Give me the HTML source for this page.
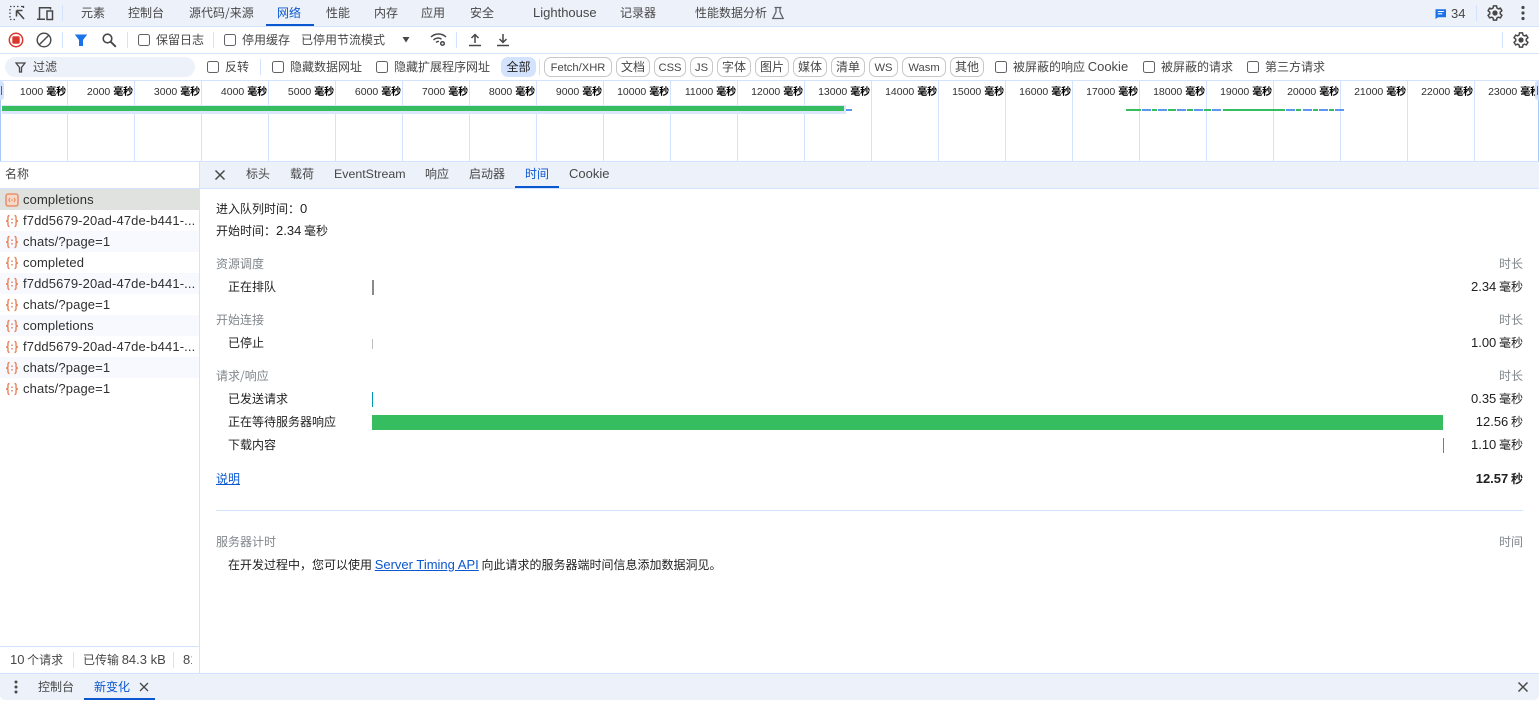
<!DOCTYPE html>
<html lang="zh"><head><meta charset="utf-8"><title>DevTools</title>
<style>
html,body{margin:0;padding:0;width:1539px;height:701px;overflow:hidden;background:#fff}
body{position:relative;font:12px/16px "Noto Sans CJK SC","Liberation Sans",sans-serif;color:#1f1f1f}
div,span,svg,a{position:absolute;box-sizing:border-box}
.t{white-space:nowrap;height:16px;line-height:16px}
.t b,.t a{position:static;font-weight:normal}
.l{font-family:"Liberation Sans",sans-serif;font-size:13px;position:static}
.g{color:#474747}
.m{color:#80868b}
.r{right:16px;text-align:right}
.bar{background:#edf2fa}
.ln{background:#d3e3fd}
.sep{width:1px;background:#d3e3fd}
.cb{width:12px;height:12px;border:1px solid #5f6368;border-radius:2.5px;background:#fff}
.chip{top:57px;height:20px;border:1px solid #c7c7c7;border-radius:7px;text-align:center;line-height:18px;color:#474747;background:#fff;white-space:nowrap}
.chip b{font-family:"Liberation Sans",sans-serif;font-weight:normal;font-size:11.2px;position:static}
.row{left:0;width:199px;height:21px}
.rt{left:23px;white-space:nowrap;font-family:"Liberation Sans",sans-serif;font-size:13px;line-height:21px;color:#303030;letter-spacing:.12px}
.ic{left:5px;width:14px;height:14px}
#tl{left:1px;top:81px;height:80px;display:flex;width:1541px}
#tl>p{box-sizing:border-box;margin:0;flex:0 0 67px;width:67px;height:80px;border-right:1px solid #d3e3fd;text-align:right;padding:3px 1px 0 0;font:10.5px/14px "Liberation Sans",sans-serif;color:#303030;white-space:nowrap;overflow:hidden}
#tl>p i{font:10px/14px "Noto Sans CJK SC",sans-serif;font-style:normal;color:#000;font-weight:700;letter-spacing:-.1px}
.gs,.bs{top:109px;height:2px}
.gs{background:#36bd60}.bs{background:#5c97f0}
</style></head><body>

<!-- top bar -->
<div class="bar" style="left:0;top:0;width:1539px;height:26px"></div>
<div class="ln" style="left:0;top:26px;width:1539px;height:1px"></div>
<svg style="left:8px;top:4px" width="18" height="18" viewBox="0 0 18 18" fill="none" stroke="#474747"><path d="M2 2.500h1.500M5.500 2.500h1.500M9 2.500h1.500M13 2.500h2.500v1.500M2 5v1.500M2 8.500v1.500M2 12v1.500M2 15.500h1.500M5.500 15.500h1.500" stroke-width="1.300"/><path d="M8.500 6.500h6M8.500 6.500v6M8.500 6.500l7.500 8.500" stroke-width="1.600"/></svg>
<svg style="left:36px;top:4px" width="18" height="18" viewBox="0 0 18 18" fill="none" stroke="#474747" stroke-width="1.500"><path d="M1 15.200h8M3.500 15V3.700h11v1.800"/><rect x="11" y="7" width="5.500" height="8.500"/></svg>
<div class="sep" style="left:62px;top:5px;height:16px"></div>
<span class="t g" style="left:81px;top:5px">元素</span>
<span class="t g" style="left:128px;top:5px">控制台</span>
<span class="t g" style="left:189px;top:5px">源代码/来源</span>
<span class="t" style="left:277px;top:5px;color:#0b57d0">网络</span>
<div style="left:266px;top:24px;width:48px;height:2px;background:#0b57d0"></div>
<span class="t g" style="left:326px;top:5px">性能</span>
<span class="t g" style="left:374px;top:5px">内存</span>
<span class="t g" style="left:421px;top:5px">应用</span>
<span class="t g" style="left:470px;top:5px">安全</span>
<span class="t g" style="left:533px;top:5px"><b class="l">Lighthouse</b></span>
<span class="t g" style="left:620px;top:5px">记录器</span>
<span class="t g" style="left:695px;top:5px">性能数据分析</span>
<svg style="left:771px;top:6px" width="14" height="14" viewBox="0 0 14 14" fill="none" stroke="#5f6368" stroke-width="1.300"><path d="M3.500 1.500h7M5 1.500v4.500L1.800 12.500h10.400L9 6V1.500"/></svg>
<svg style="left:1435px;top:8px" width="12" height="12" viewBox="0 0 12 12"><path d="M.5 1.200h10.500v8H3L.5 11z" fill="#1a73e8"/><path d="M2.800 3.500h6M2.800 5.800h4.500" stroke="#fff" stroke-width="1.100"/></svg>
<span class="t g" style="left:1451px;top:6px"><b class="l">34</b></span>
<div class="sep" style="left:1476px;top:5px;height:16px"></div>
<svg style="left:1486px;top:4px" width="18" height="18" viewBox="0 0 24 24" fill="none" stroke="#474747" stroke-width="2"><path d="M10 2.500h4l.6 2.900 1.800 1 2.800-.9 2 3.400-2.200 2v2.200l2.200 2-2 3.400-2.800-.9-1.800 1-.6 2.900h-4l-.6-2.900-1.800-1-2.800.9-2-3.400 2.200-2v-2.200l-2.200-2 2-3.400 2.800.9 1.800-1z"/><circle cx="12" cy="12" r="2.500" fill="#474747"/></svg>
<svg style="left:1520px;top:5px" width="6" height="16" viewBox="0 0 6 16" fill="#474747"><circle cx="3" cy="2.500" r="1.600"/><circle cx="3" cy="8" r="1.600"/><circle cx="3" cy="13.500" r="1.600"/></svg>

<!-- second row -->
<div class="ln" style="left:0;top:53px;width:1539px;height:1px"></div>
<svg style="left:8px;top:32px" width="16" height="16" viewBox="0 0 16 16"><circle cx="8" cy="8" r="6.700" fill="none" stroke="#dc362e" stroke-width="1.500"/><rect x="4.300" y="4.300" width="7.400" height="7.400" rx="1.500" fill="#dc362e"/></svg>
<svg style="left:36px;top:32px" width="16" height="16" viewBox="0 0 16 16" fill="none" stroke="#474747" stroke-width="1.400"><circle cx="8" cy="8" r="6.800"/><path d="M3.200 12.800L12.800 3.200"/></svg>
<div class="sep" style="left:62px;top:32px;height:16px"></div>
<svg style="left:74px;top:33px" width="14" height="14" viewBox="0 0 14 14"><path d="M.8 1.500h12.400L9 7v6H5V7z" fill="#1a73e8"/></svg>
<svg style="left:101px;top:32px" width="16" height="16" viewBox="0 0 16 16" fill="none" stroke="#474747" stroke-width="1.600"><circle cx="6.500" cy="6.500" r="4.300"/><path d="M9.800 9.800l5 5" stroke-width="1.900"/></svg>
<div class="sep" style="left:127px;top:32px;height:16px"></div>
<div class="cb" style="left:138px;top:34px"></div>
<span class="t g" style="left:156px;top:32px">保留日志</span>
<div class="sep" style="left:213px;top:32px;height:16px"></div>
<div class="cb" style="left:224px;top:34px"></div>
<span class="t g" style="left:242px;top:32px">停用缓存</span>
<span class="t g" style="left:301px;top:32px">已停用节流模式</span>
<svg style="left:401px;top:37px" width="10" height="6" viewBox="0 0 10 6"><path d="M1.500 0h7L5 5.500z" fill="#474747"/></svg>
<svg style="left:430px;top:32px" width="17" height="15" viewBox="0 0 17 15" fill="none" stroke="#474747" stroke-width="1.400"><path d="M1 5C5 1 12 1 16 5M3.500 8c2.500-2.500 6-2.500 8 -.8M6 10.500c1-1 2-1.200 3-.9"/><circle cx="12.500" cy="11.500" r="1.800" stroke-width="1.500"/></svg>
<div class="sep" style="left:456px;top:32px;height:16px"></div>
<svg style="left:468px;top:33px" width="14" height="14" viewBox="0 0 14 14" fill="none" stroke="#474747" stroke-width="1.500"><path d="M7 10V1.500M3.500 5L7 1.500 10.500 5"/><path d="M1 12.500h12"/></svg>
<svg style="left:496px;top:33px" width="14" height="14" viewBox="0 0 14 14" fill="none" stroke="#474747" stroke-width="1.500"><path d="M7 1v8.500M3.500 6L7 9.500 10.500 6"/><path d="M1 12.500h12"/></svg>
<div class="sep" style="left:1502px;top:32px;height:16px"></div>
<svg style="left:1512px;top:31px" width="18" height="18" viewBox="0 0 24 24" fill="none" stroke="#474747" stroke-width="2"><path d="M10 2.500h4l.6 2.900 1.800 1 2.800-.9 2 3.400-2.200 2v2.200l2.200 2-2 3.400-2.800-.9-1.800 1-.6 2.900h-4l-.6-2.900-1.800-1-2.800.9-2-3.400 2.200-2v-2.200l-2.200-2 2-3.400 2.800.9 1.800-1z"/><circle cx="12" cy="12" r="2.500" fill="#474747"/></svg>

<!-- filter row -->
<div class="ln" style="left:0;top:80px;width:1539px;height:1px"></div>
<div class="bar" style="left:5px;top:57px;width:190px;height:20px;border-radius:10px"></div>
<svg style="left:15px;top:62px" width="11" height="11" viewBox="0 0 11 11" fill="none" stroke="#474747" stroke-width="1.300"><path d="M1 1h9L6.500 5.500V10h-2V5.500z"/></svg>
<span class="t g" style="left:33px;top:59px">过滤</span>
<div class="cb" style="left:207px;top:61px"></div>
<span class="t g" style="left:225px;top:59px">反转</span>
<div class="sep" style="left:260px;top:59px;height:16px"></div>
<div class="cb" style="left:272px;top:61px"></div>
<span class="t g" style="left:290px;top:59px">隐藏数据网址</span>
<div class="cb" style="left:376px;top:61px"></div>
<span class="t g" style="left:394px;top:59px">隐藏扩展程序网址</span>
<div style="left:501px;top:57px;width:35px;height:20px;background:#d3e3fd;border-radius:7px;text-align:center;line-height:20px;color:#1f1f1f">全部</div>
<div class="sep" style="left:539px;top:59px;height:16px"></div>
<div class="chip" style="left:544px;width:68px"><b>Fetch/XHR</b></div>
<div class="chip" style="left:616px;width:34px">文档</div>
<div class="chip" style="left:654px;width:32px"><b>CSS</b></div>
<div class="chip" style="left:690px;width:23px"><b>JS</b></div>
<div class="chip" style="left:717px;width:34px">字体</div>
<div class="chip" style="left:755px;width:34px">图片</div>
<div class="chip" style="left:793px;width:34px">媒体</div>
<div class="chip" style="left:831px;width:34px">清单</div>
<div class="chip" style="left:869px;width:29px"><b>WS</b></div>
<div class="chip" style="left:902px;width:44px"><b>Wasm</b></div>
<div class="chip" style="left:950px;width:34px">其他</div>
<div class="cb" style="left:995px;top:61px"></div>
<span class="t g" style="left:1013px;top:59px">被屏蔽的响应 <b class="l" style="font-weight:normal">Cookie</b></span>
<div class="cb" style="left:1143px;top:61px"></div>
<span class="t g" style="left:1161px;top:59px">被屏蔽的请求</span>
<div class="cb" style="left:1247px;top:61px"></div>
<span class="t g" style="left:1265px;top:59px">第三方请求</span>

<!-- timeline -->
<div id="tl">
<p>1000 <i>毫秒</i></p><p>2000 <i>毫秒</i></p><p>3000 <i>毫秒</i></p><p>4000 <i>毫秒</i></p><p>5000 <i>毫秒</i></p><p>6000 <i>毫秒</i></p><p>7000 <i>毫秒</i></p><p>8000 <i>毫秒</i></p><p>9000 <i>毫秒</i></p><p>10000 <i>毫秒</i></p><p>11000 <i>毫秒</i></p><p>12000 <i>毫秒</i></p><p>13000 <i>毫秒</i></p><p>14000 <i>毫秒</i></p><p>15000 <i>毫秒</i></p><p>16000 <i>毫秒</i></p><p>17000 <i>毫秒</i></p><p>18000 <i>毫秒</i></p><p>19000 <i>毫秒</i></p><p>20000 <i>毫秒</i></p><p>21000 <i>毫秒</i></p><p>22000 <i>毫秒</i></p><p>23000 <i>毫秒</i></p>
</div>
<div style="left:0;top:81px;width:1px;height:80px;background:#a8c7fa"></div>
<div style="left:0;top:81px;width:4px;height:19px;background:#d3e3fd;border-radius:0 3px 3px 0"></div>
<div style="left:1px;top:86px;width:1px;height:9px;background:#5f6368"></div>
<div style="left:1538px;top:81px;width:1px;height:80px;background:#a8c7fa"></div>
<div style="left:1535px;top:81px;width:4px;height:19px;background:#d3e3fd;border-radius:3px 0 0 3px"></div>
<div style="left:1537px;top:86px;width:1px;height:9px;background:#5f6368"></div>
<div style="left:2px;top:105px;width:844px;height:9px;background:#dbe7fd"></div>
<div style="left:2px;top:106px;width:842px;height:5px;background:#36bd60"></div>
<div class="bs" style="left:846px;width:6px"></div>
<div class="gs" style="left:1126px;width:15px"></div><div class="bs" style="left:1142px;width:9px"></div>
<div class="gs" style="left:1152px;width:5px"></div><div class="bs" style="left:1158px;width:9px"></div>
<div class="gs" style="left:1168px;width:8px"></div><div class="bs" style="left:1177px;width:9px"></div>
<div class="gs" style="left:1187px;width:6px"></div><div class="bs" style="left:1194px;width:9px"></div>
<div class="gs" style="left:1204px;width:7px"></div><div class="bs" style="left:1212px;width:9px"></div>
<div class="gs" style="left:1223px;width:62px"></div><div class="bs" style="left:1286px;width:9px"></div>
<div class="gs" style="left:1296px;width:5px"></div><div class="bs" style="left:1303px;width:9px"></div>
<div class="gs" style="left:1313px;width:5px"></div><div class="bs" style="left:1319px;width:9px"></div>
<div class="gs" style="left:1329px;width:5px"></div><div class="bs" style="left:1335px;width:9px"></div>
<div class="ln" style="left:0;top:161px;width:1539px;height:1px"></div>

<!-- left panel -->
<div class="sep" style="left:199px;top:162px;height:511px"></div>
<span class="t g" style="left:5px;top:166px">名称</span>
<div class="ln" style="left:0;top:188px;width:199px;height:1px"></div>
<div class="row" style="top:189px;background:#e0e2df"></div>
<div class="row" style="top:231px;background:#f7f9fe"></div>
<div class="row" style="top:273px;background:#f7f9fe"></div>
<div class="row" style="top:315px;background:#f7f9fe"></div>
<div class="row" style="top:357px;background:#f7f9fe"></div>

<svg class="ic" style="top:193px" viewBox="0 0 14 14"><rect x="1" y="1" width="12" height="12" rx="2" fill="#f6d8c8" stroke="#e8835a" stroke-width="1.300"/><path d="M5 5L3.800 7 5 9M9 5l1.200 2L9 9" fill="none" stroke="#e8835a"/><circle cx="7" cy="7" r=".8" fill="#e8835a"/></svg>
<span class="rt" style="top:189px">completions</span>

<svg class="ic" style="top:214px" viewBox="0 0 14 14" fill="none" stroke="#e8835a" stroke-width="1.400"><path d="M4.500 1.500C2.500 1.500 3 4 3 5.500 3 6.500 2 7 1 7c1 0 2 .5 2 1.500 0 1.500-.5 4 1.500 4M9.500 1.500c2 0 1.500 2.500 1.500 4 0 1 1 1.500 2 1.500-1 0-2 .5-2 1.500 0 1.500.5 4-1.500 4"/><path d="M7 4.500v1.500M7 8v1.500" stroke-width="1.500"/></svg>
<span class="rt" style="top:210px">f7dd5679-20ad-47de-b441-...</span>

<svg class="ic" style="top:235px" viewBox="0 0 14 14" fill="none" stroke="#e8835a" stroke-width="1.400"><path d="M4.500 1.500C2.500 1.500 3 4 3 5.500 3 6.500 2 7 1 7c1 0 2 .5 2 1.500 0 1.500-.5 4 1.500 4M9.500 1.500c2 0 1.500 2.500 1.500 4 0 1 1 1.500 2 1.500-1 0-2 .5-2 1.500 0 1.500.5 4-1.500 4"/><path d="M7 4.500v1.500M7 8v1.500" stroke-width="1.500"/></svg>
<span class="rt" style="top:231px">chats/?page=1</span>

<svg class="ic" style="top:256px" viewBox="0 0 14 14" fill="none" stroke="#e8835a" stroke-width="1.400"><path d="M4.500 1.500C2.500 1.500 3 4 3 5.500 3 6.500 2 7 1 7c1 0 2 .5 2 1.500 0 1.500-.5 4 1.500 4M9.500 1.500c2 0 1.500 2.500 1.500 4 0 1 1 1.500 2 1.500-1 0-2 .5-2 1.500 0 1.500.5 4-1.500 4"/><path d="M7 4.500v1.500M7 8v1.500" stroke-width="1.500"/></svg>
<span class="rt" style="top:252px">completed</span>

<svg class="ic" style="top:277px" viewBox="0 0 14 14" fill="none" stroke="#e8835a" stroke-width="1.400"><path d="M4.500 1.500C2.500 1.500 3 4 3 5.500 3 6.500 2 7 1 7c1 0 2 .5 2 1.500 0 1.500-.5 4 1.500 4M9.500 1.500c2 0 1.500 2.500 1.500 4 0 1 1 1.500 2 1.500-1 0-2 .5-2 1.500 0 1.500.5 4-1.500 4"/><path d="M7 4.500v1.500M7 8v1.500" stroke-width="1.500"/></svg>
<span class="rt" style="top:273px">f7dd5679-20ad-47de-b441-...</span>

<svg class="ic" style="top:298px" viewBox="0 0 14 14" fill="none" stroke="#e8835a" stroke-width="1.400"><path d="M4.500 1.500C2.500 1.500 3 4 3 5.500 3 6.500 2 7 1 7c1 0 2 .5 2 1.500 0 1.500-.5 4 1.500 4M9.500 1.500c2 0 1.500 2.500 1.500 4 0 1 1 1.500 2 1.500-1 0-2 .5-2 1.500 0 1.500.5 4-1.500 4"/><path d="M7 4.500v1.500M7 8v1.500" stroke-width="1.500"/></svg>
<span class="rt" style="top:294px">chats/?page=1</span>

<svg class="ic" style="top:319px" viewBox="0 0 14 14" fill="none" stroke="#e8835a" stroke-width="1.400"><path d="M4.500 1.500C2.500 1.500 3 4 3 5.500 3 6.500 2 7 1 7c1 0 2 .5 2 1.500 0 1.500-.5 4 1.500 4M9.500 1.500c2 0 1.500 2.500 1.500 4 0 1 1 1.500 2 1.500-1 0-2 .5-2 1.500 0 1.500.5 4-1.500 4"/><path d="M7 4.500v1.500M7 8v1.500" stroke-width="1.500"/></svg>
<span class="rt" style="top:315px">completions</span>

<svg class="ic" style="top:340px" viewBox="0 0 14 14" fill="none" stroke="#e8835a" stroke-width="1.400"><path d="M4.500 1.500C2.500 1.500 3 4 3 5.500 3 6.500 2 7 1 7c1 0 2 .5 2 1.500 0 1.500-.5 4 1.500 4M9.500 1.500c2 0 1.500 2.500 1.500 4 0 1 1 1.500 2 1.500-1 0-2 .5-2 1.500 0 1.500.5 4-1.500 4"/><path d="M7 4.500v1.500M7 8v1.500" stroke-width="1.500"/></svg>
<span class="rt" style="top:336px">f7dd5679-20ad-47de-b441-...</span>

<svg class="ic" style="top:361px" viewBox="0 0 14 14" fill="none" stroke="#e8835a" stroke-width="1.400"><path d="M4.500 1.500C2.500 1.500 3 4 3 5.500 3 6.500 2 7 1 7c1 0 2 .5 2 1.500 0 1.500-.5 4 1.500 4M9.500 1.500c2 0 1.500 2.500 1.500 4 0 1 1 1.500 2 1.500-1 0-2 .5-2 1.500 0 1.500.5 4-1.500 4"/><path d="M7 4.500v1.500M7 8v1.500" stroke-width="1.500"/></svg>
<span class="rt" style="top:357px">chats/?page=1</span>

<svg class="ic" style="top:382px" viewBox="0 0 14 14" fill="none" stroke="#e8835a" stroke-width="1.400"><path d="M4.500 1.500C2.500 1.500 3 4 3 5.500 3 6.500 2 7 1 7c1 0 2 .5 2 1.500 0 1.500-.5 4 1.500 4M9.500 1.500c2 0 1.500 2.500 1.500 4 0 1 1 1.500 2 1.500-1 0-2 .5-2 1.500 0 1.500.5 4-1.500 4"/><path d="M7 4.500v1.500M7 8v1.500" stroke-width="1.500"/></svg>
<span class="rt" style="top:378px">chats/?page=1</span>

<!-- status bar -->
<div class="ln" style="left:0;top:646px;width:199px;height:1px"></div>
<span class="t g" style="left:10px;top:652px"><b class="l">10</b> 个请求</span>
<div class="sep" style="left:73px;top:652px;height:16px"></div>
<span class="t g" style="left:83px;top:652px">已传输 <b class="l">84.3 kB</b></span>
<div class="sep" style="left:173px;top:652px;height:16px"></div>
<div class="t g" style="left:183px;top:652px;width:9px;overflow:hidden"><b class="l">81</b></div>

<!-- detail tabs -->
<div class="bar" style="left:200px;top:162px;width:1339px;height:26px"></div>
<div class="ln" style="left:200px;top:188px;width:1339px;height:1px"></div>
<svg style="left:214px;top:169px" width="12" height="12" viewBox="0 0 12 12" stroke="#474747" stroke-width="1.500"><path d="M1.500 1.500l9 9M10.500 1.500l-9 9"/></svg>
<span class="t g" style="left:246px;top:166px">标头</span>
<span class="t g" style="left:290px;top:166px">载荷</span>
<span class="t g" style="left:334px;top:166px"><b class="l" style="font-size:12.400px">EventStream</b></span>
<span class="t g" style="left:425px;top:166px">响应</span>
<span class="t g" style="left:469px;top:166px">启动器</span>
<span class="t" style="left:525px;top:166px;color:#0b57d0">时间</span>
<div style="left:515px;top:186px;width:44px;height:2px;background:#0b57d0"></div>
<span class="t g" style="left:569px;top:166px"><b class="l">Cookie</b></span>

<!-- timing content -->
<span class="t" style="left:216px;top:201px">进入队列时间：<b class="l">0</b></span>
<span class="t" style="left:216px;top:223px">开始时间：<b class="l">2.34</b> 毫秒</span>

<span class="t m" style="left:216px;top:256px">资源调度</span>
<span class="t m r" style="top:256px">时长</span>
<span class="t" style="left:228px;top:279px">正在排队</span>
<div style="left:372px;top:280px;width:2px;height:15px;background:#8a8a8a"></div>
<span class="t r" style="top:279px"><b class="l">2.34</b> 毫秒</span>

<span class="t m" style="left:216px;top:312px">开始连接</span>
<span class="t m r" style="top:312px">时长</span>
<span class="t" style="left:228px;top:335px">已停止</span>
<div style="left:372px;top:339px;width:1px;height:10px;background:#bdbdbd"></div>
<span class="t r" style="top:335px"><b class="l">1.00</b> 毫秒</span>

<span class="t m" style="left:216px;top:368px">请求/响应</span>
<span class="t m r" style="top:368px">时长</span>
<span class="t" style="left:228px;top:391px">已发送请求</span>
<div style="left:372px;top:392px;width:1px;height:15px;background:#0097b8"></div>
<span class="t r" style="top:391px"><b class="l">0.35</b> 毫秒</span>
<span class="t" style="left:228px;top:414px">正在等待服务器响应</span>
<div style="left:372px;top:415px;width:1071px;height:15px;background:#36bd60"></div>
<span class="t r" style="top:414px"><b class="l">12.56</b> 秒</span>
<span class="t" style="left:228px;top:437px">下载内容</span>
<div style="left:1443px;top:438px;width:1px;height:15px;background:#4a80d8"></div>
<span class="t r" style="top:437px"><b class="l">1.10</b> 毫秒</span>

<span class="t" style="left:216px;top:471px"><a style="color:#0b57d0;text-decoration:underline">说明</a></span>
<span class="t r" style="top:471px;font-weight:700"><b class="l" style="font-weight:700">12.57</b> 秒</span>
<div class="ln" style="left:216px;top:510px;width:1307px;height:1px"></div>
<span class="t m" style="left:216px;top:534px">服务器计时</span>
<span class="t m r" style="top:534px">时间</span>
<span class="t" style="left:228px;top:557px">在开发过程中，您可以使用 <a class="l" style="color:#0b57d0;text-decoration:underline">Server Timing API</a> 向此请求的服务器端时间信息添加数据洞见。</span>

<!-- bottom drawer bar -->
<div class="bar" style="left:0;top:673px;width:1539px;height:27px;border-top:1px solid #d3e3fd;border-radius:0 0 5px 5px"></div>
<svg style="left:13px;top:679px" width="6" height="16" viewBox="0 0 6 16" fill="#474747"><circle cx="3" cy="3" r="1.500"/><circle cx="3" cy="8" r="1.500"/><circle cx="3" cy="13" r="1.500"/></svg>
<span class="t g" style="left:38px;top:679px">控制台</span>
<span class="t" style="left:94px;top:679px;color:#0b57d0">新变化</span>
<svg style="left:139px;top:682px" width="10" height="10" viewBox="0 0 10 10" stroke="#474747" stroke-width="1.300"><path d="M1 1l8 8M9 1L1 9"/></svg>
<div style="left:84px;top:698px;width:71px;height:2px;background:#0b57d0"></div>
<svg style="left:1517px;top:681px" width="12" height="12" viewBox="0 0 12 12" stroke="#474747" stroke-width="1.500"><path d="M1.500 1.500l9 9M10.500 1.500l-9 9"/></svg>
</body></html>
